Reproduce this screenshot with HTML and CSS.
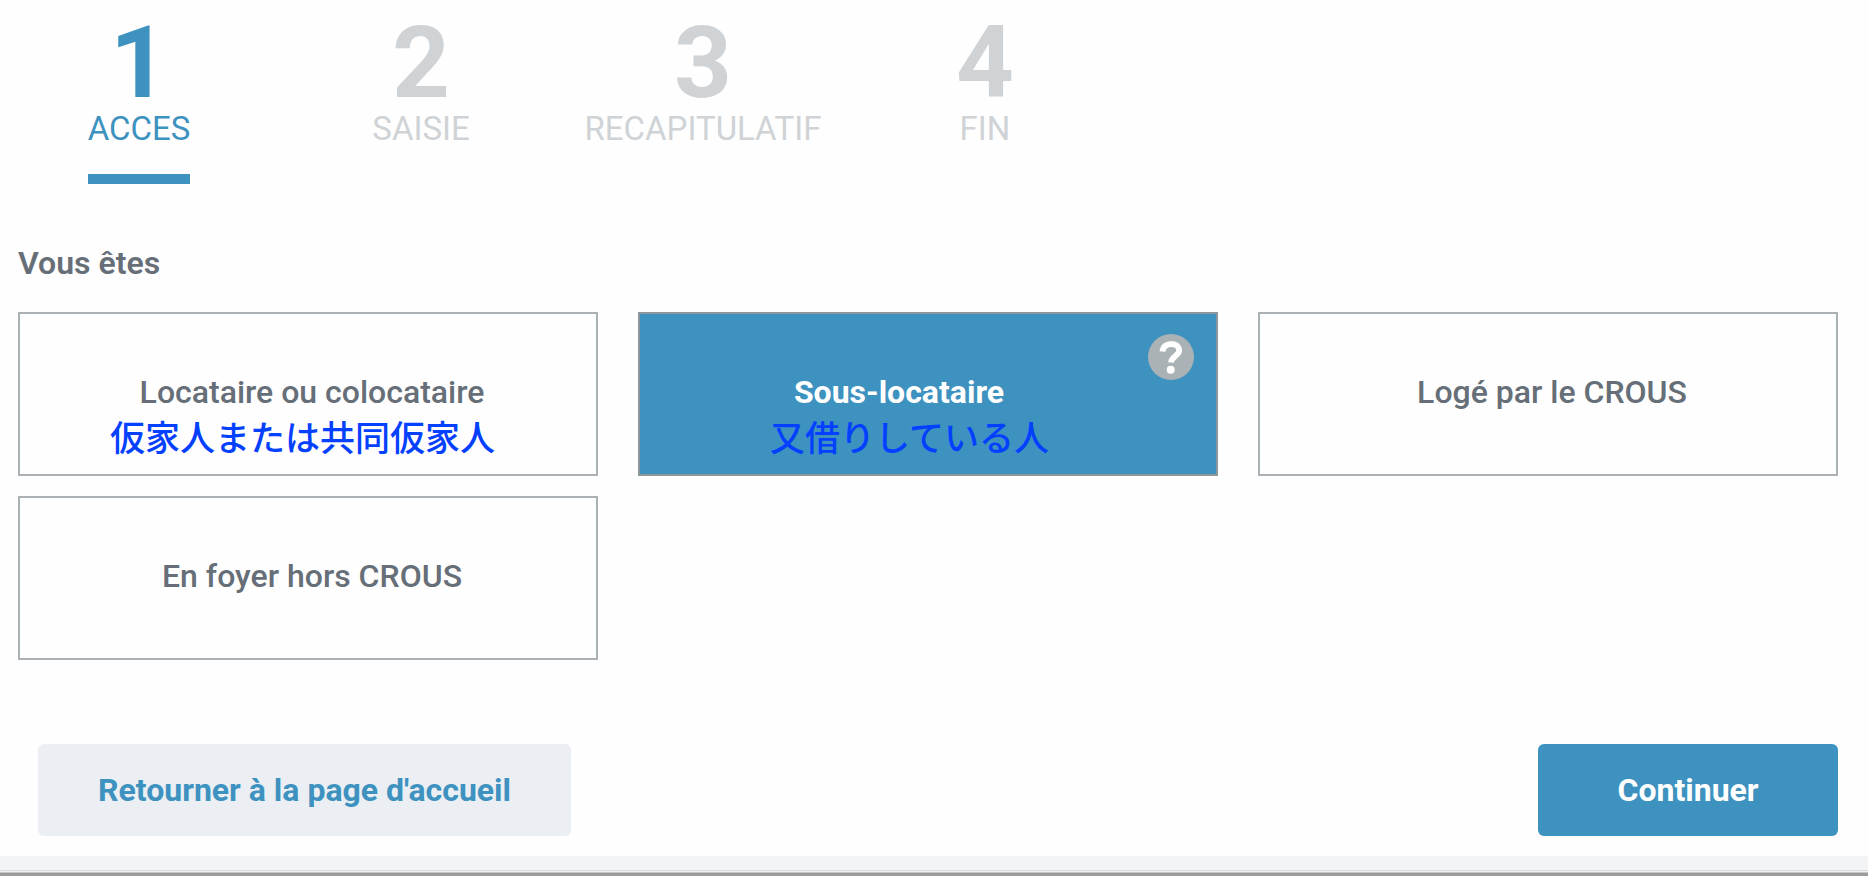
FILE: index.html
```html
<!DOCTYPE html>
<html lang="fr">
<head>
    <meta charset="UTF-8">
    <meta name="viewport" content="width=device-width, initial-scale=1.0">
    <title>Vous êtes</title>
    <link rel="stylesheet" href="styles.css">
</head>
<body>

<main class="page">
    <ol class="steps">
        <li class="step active" aria-current="step">
            <span class="step-number">1</span>
            <span class="step-label">ACCES</span>
        </li>
        <li class="step">
            <span class="step-number">2</span>
            <span class="step-label">SAISIE</span>
        </li>
        <li class="step">
            <span class="step-number">3</span>
            <span class="step-label">RECAPITULATIF</span>
        </li>
        <li class="step">
            <span class="step-number">4</span>
            <span class="step-label">FIN</span>
        </li>
    </ol>

    <form class="form">
        <fieldset class="choices">
            <legend>Vous êtes</legend>
            <div class="choice-grid">
                <div class="choice">
                    <input type="radio" id="locataire" name="statut" value="locataire">
                    <label for="locataire">Locataire ou colocataire</label>
                    <span class="note" lang="ja">仮家人または共同仮家人</span>
                </div>
                <div class="choice with-help">
                    <input type="radio" id="sous-locataire" name="statut" value="sous-locataire" checked>
                    <label for="sous-locataire">Sous-locataire</label>
                    <span class="note" lang="ja">又借りしている人</span>
                    <button type="button" class="help" aria-label="Aide">
                        <svg viewBox="0 0 46 46" width="46" height="46" aria-hidden="true">
                            <circle cx="23" cy="23" r="23" fill="#aab2b5"/>
                            <path d="M14.500 17.500C15 12.500 18.500 10 23.500 10C28.500 10 31.200 13 31.200 16.500C31.200 21.500 23.500 22.500 23 28.500" fill="none" stroke="#fff" stroke-width="5.800"/>
                            <circle cx="22.700" cy="35.800" r="4" fill="#fff"/>
                        </svg>
                    </button>
                </div>
                <div class="choice">
                    <input type="radio" id="crous" name="statut" value="crous">
                    <label for="crous">Logé par le CROUS</label>
                </div>
                <div class="choice">
                    <input type="radio" id="foyer" name="statut" value="foyer">
                    <label for="foyer">En foyer hors CROUS</label>
                </div>
            </div>
        </fieldset>

        <div class="actions">
            <button type="button" class="btn btn-back">Retourner à la page d'accueil</button>
            <button type="submit" class="btn btn-next">Continuer</button>
        </div>
    </form>
</main>

<footer class="footer"></footer>

</body>
</html>
```
FILE: styles.css
```css
* {
    box-sizing: border-box;
}
body {
    margin: 0;
    font-family: Roboto, "Liberation Sans", sans-serif;
    font-size: 32px;
    line-height: 40px;
    background-color: #fefefe;
    color: #666e78;
}

/* Etapes */
.steps {
    display: flex;
    gap: 4px;
    margin: 0;
    padding: 0;
    list-style: none;
}
.step {
    flex: 0 1 278px;
    display: flex;
    flex-direction: column;
    align-items: center;
    color: #cfd3d6;
}
.step-number {
    padding-top: 16px;
    font-size: 101px;
    font-weight: 700;
    line-height: 93px;
}
.step-label {
    padding-bottom: 25px;
    border-bottom: 10px solid transparent;
    font-size: 33px;
}
.step.active {
    color: #3e92c0;
}
.step.active .step-label {
    border-color: #3e92c0;
}

/* Choix */
.form {
    padding: 59px 30px 20px 18px;
}
.choices {
    margin: 0;
    padding: 0;
    border: none;
    min-width: 0;
}
.choices legend {
    padding: 0;
    margin-bottom: 29px;
    font-weight: 600;
}
.choice-grid {
    display: grid;
    grid-template-columns: repeat(3, 1fr);
    gap: 20px 40px;
}
.choice {
    position: relative;
}
.choice input {
    position: absolute;
    opacity: 0;
}
.choice label {
    display: flex;
    align-items: center;
    justify-content: center;
    min-height: 164px;
    padding: 0 0 4px 8px;
    border: 2px solid #aab2b5;
    font-weight: 500;
    cursor: pointer;
}
.choice.with-help label {
    padding-right: 66px;
}
.choice input:checked + label {
    background-color: #3e92c0;
    border-color: #8c979b;
    color: #fff;
    font-weight: 700;
}
.note {
    position: absolute;
    left: 92px;
    bottom: 20px;
    font-family: "Noto Sans CJK JP", sans-serif;
    font-size: 35px;
    font-weight: 500;
    color: #0440ff;
    white-space: nowrap;
    pointer-events: none;
}
.with-help .note {
    left: 132px;
}
.help {
    position: absolute;
    top: 22px;
    right: 24px;
    padding: 0;
    border: none;
    background: none;
    line-height: 0;
    cursor: pointer;
}

/* Boutons */
.actions {
    display: flex;
    justify-content: space-between;
    margin-top: 84px;
    padding-left: 20px;
}
.btn {
    min-width: 300px;
    padding: 26px 60px;
    border: none;
    border-radius: 6px;
    font: inherit;
    font-weight: 700;
    cursor: pointer;
}
.btn-back {
    background-color: #ebeff4;
    color: #3e92c0;
}
.btn-next {
    background-color: #3e92c0;
    color: #fff;
}

.footer {
    height: 20px;
    background-color: #f2f4f5;
    border-bottom: 3px solid #9b9c9c;
    box-shadow: inset 0 -1px #c4c6c7, inset 0 -2px #f0f1f2, inset 0 -3px #d9dcde;
}
```
